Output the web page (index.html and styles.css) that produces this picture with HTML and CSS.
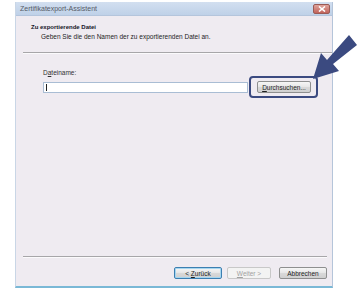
FILE: index.html
```html
<!DOCTYPE html>
<html>
<head>
<meta charset="utf-8">
<link rel="stylesheet" href="styles.css">
</head>
<body>
<div class="window">
  <div class="titlebar">
    <span class="title">Zertifikatexport-Assistent</span>
    <span class="close"><svg width="8" height="6" viewBox="0 0 8 6"><path d="M1 0.5 L7 5.5 M7 0.5 L1 5.5" stroke="#fff" stroke-width="1.6"/></svg></span>
  </div>
  <div class="body">
    <div class="header">
      <div class="h-title">Zu exportierende Datei</div>
      <div class="h-sub">Geben Sie die den Namen der zu exportierenden Datei an.</div>
    </div>
    <div class="content">
      <div class="label">D<span class="u">a</span>teiname:</div>
      <div class="row">
        <div class="input"><span class="caret"></span></div>
        <div class="browse-wrap">
          <div class="btn browse"><span><span class="u">D</span>urchsuchen...</span></div>
        </div>
      </div>
    </div>
    <div class="footer">
      <div class="btn back"><span>&lt; <span class="u">Z</span>urück</span></div>
      <div class="btn disabled"><span><span class="u">W</span>eiter &gt;</span></div>
      <div class="btn cancel"><span>Abbrechen</span></div>
    </div>
  </div>
</div>
<svg class="arrow" width="60" height="50" viewBox="0 0 60 50">
  <path d="M50 2 L58 12 L34 31 L40 38 L14 46 L22 20 L28 27 Z" fill="#3b4a80"/>
</svg>
</body>
</html>
```
FILE: styles.css
```css
* { box-sizing: border-box; }
html, body { margin: 0; padding: 0; background: #fff; }
body {
  width: 357px;
  height: 290px;
  position: relative;
  font-family: "Liberation Sans", Arial, sans-serif;
  font-size: 6.5px;
  color: #1c1c1c;
  padding: 2px 0 0 15px;
}
.window {
  width: 318px;
  height: 286px;
  display: flex;
  flex-direction: column;
  border-left: 1px solid #c9d6e6;
  border-right: 1px solid #b5c5da;
  border-bottom: 2px solid #7ab8d6;
  background: #efebf1;
}
.titlebar {
  height: 14px;
  display: flex;
  align-items: center;
  justify-content: space-between;
  padding: 0 2px 0 4px;
  background: linear-gradient(#d2dff0, #bfd1e8);
  border-bottom: 1px solid #b4c5dc;
}
.title {
  font-size: 7px;
  color: #555a66;
}
.close {
  width: 17px;
  height: 10px;
  display: flex;
  align-items: center;
  justify-content: center;
  background: linear-gradient(#dfa49c, #c2625a);
  border: 1px solid #9a5a55;
  border-radius: 2px;
}
.body {
  flex: 1;
  display: flex;
  flex-direction: column;
}
.header {
  height: 37px;
  padding: 8px 0 0 14px;
  margin-left: 7px;
  border-bottom: 1px solid #a7a6a9;
  box-shadow: 0 1px 0 #fbfafc;
}
.h-title {
  font-weight: bold;
  font-size: 6px;
  color: #141428;
  margin-left: -6px;
}
.h-sub {
  margin-top: 3px;
  margin-left: 4px;
}
.content {
  flex: 1;
  padding: 16px 0 0 27px;
}
.label {
  color: #303030;
}
.u { text-decoration: underline; }
.row {
  display: flex;
  align-items: center;
}
.input {
  width: 205px;
  height: 11px;
  background: #fff;
  border: 1px solid #a9bdd4;
  display: flex;
  align-items: center;
  padding-left: 2px;
}
.caret {
  width: 1px;
  height: 7px;
  background: #222;
}
.browse-wrap {
  margin-left: 1px;
  padding: 3px 5px 3px 6px;
  border: 2px solid #3b4a80;
  border-radius: 4px;
}
.btn {
  height: 12px;
  display: flex;
  align-items: center;
  justify-content: center;
  border: 1px solid #8e8f8f;
  border-radius: 2px;
  background: linear-gradient(#f6f6f6 0%, #e6e6e6 50%, #d9d9d9 51%, #d0d0d0 100%);
  font-size: 6.5px;
  color: #1e1e1e;
}
.browse {
  width: 54px;
}
.footer {
  height: 30px;
  margin: 0 5px 0 7px;
  border-top: 1px solid #a7a6a9;
  box-shadow: inset 0 1px 0 #fbfafc;
  display: flex;
  justify-content: flex-end;
  align-items: flex-start;
  padding-top: 10px;
  gap: 5px;
}
.footer .btn { width: 48px; }
.footer .btn.back {
  border-color: #3c7fb1;
  box-shadow: inset 0 0 0 1px #a6d6f0;
}
.footer .btn.disabled {
  color: #a0a0a0;
  border-color: #c8c8c8;
  background: #f3f3f3;
  width: 44px;
}
.footer .btn.cancel { margin-left: 3px; }
.arrow {
  position: absolute;
  left: 299px;
  top: 33px;
}
```
